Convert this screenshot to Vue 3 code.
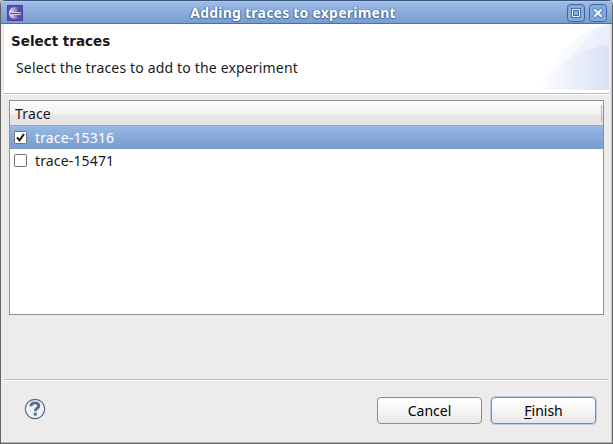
<script setup>
import { ref } from 'vue'

const traces = ref([
  { name: 'trace-15316', checked: true },
  { name: 'trace-15471', checked: false },
])
const selected = ref(0)
</script>

<template>
  <div class="window">
    <header class="titlebar">
      <svg class="app-icon" width="16" height="16" viewBox="0 0 16 16">
        <defs>
          <linearGradient id="ball" x1="0" x2="1">
            <stop offset="0" stop-color="#f4f3fc" />
            <stop offset=".55" stop-color="#8f88c8" />
            <stop offset="1" stop-color="#302864" />
          </linearGradient>
        </defs>
        <rect width="16" height="16" fill="#4d3fa6" />
        <rect x="1" y="1" width="14" height="14" fill="#5c4fb4" />
        <circle cx="8" cy="8" r="6" fill="url(#ball)" />
        <path d="M3 7.5h11M3 9.5h11" stroke="#c9c6ea" />
        <path d="M3 8.5h11" stroke="#5a50a4" />
      </svg>
      <h1 class="title">Adding traces to experiment</h1>
      <div class="controls">
        <svg width="18" height="18" viewBox="0 0 18 18">
          <rect x=".5" y=".5" width="17" height="17" rx="3" fill="#86a9dc" stroke="#3f659b" />
          <rect x="4" y="4" width="10" height="10" fill="#486fa8" />
          <path d="M5.5 5.5h7v7h-7z" fill="none" stroke="#e9f0fa" />
          <path d="M7 7h4v4h-4z" fill="#86a9dc" />
        </svg>
        <svg width="18" height="18" viewBox="0 0 18 18">
          <rect x=".5" y=".5" width="17" height="17" rx="3" fill="#86a9dc" stroke="#3f659b" />
          <path d="M6 6l6 6M12 6l-6 6" stroke="#5a80b8" stroke-width="4" stroke-linecap="square" />
          <path d="M6 6l6 6M12 6l-6 6" stroke="#edf3fb" stroke-width="2.2" stroke-linecap="square" />
        </svg>
      </div>
    </header>

    <section class="banner">
      <div class="banner-text">
        <h2>Select traces</h2>
        <p>Select the traces to add to the experiment</p>
      </div>
      <svg class="swoosh" width="76" height="66" viewBox="0 0 76 66">
        <defs>
          <linearGradient id="outer" x1="0" x2="1">
            <stop offset="0" stop-color="#fff" />
            <stop offset=".5" stop-color="#f9fafe" />
            <stop offset="1" stop-color="#edf2fb" />
          </linearGradient>
          <linearGradient id="inner" x1="0" x2="1">
            <stop offset="0" stop-color="#fff" />
            <stop offset=".5" stop-color="#ebf0fa" />
            <stop offset="1" stop-color="#dae2f6" />
          </linearGradient>
        </defs>
        <path d="M4 66C18 35 43 7 76 0V66Z" fill="url(#outer)" />
        <path d="M36 38C45 22 58 8 76 2V66H22Z" fill="#dfe8f8" opacity=".35" />
        <path d="M4 66C20 43 46 24 76 21V66Z" fill="url(#inner)" />
      </svg>
    </section>

    <main class="body">
      <div class="table">
        <div class="thead"><span>Trace</span></div>
        <div
          v-for="(trace, i) in traces"
          :key="trace.name"
          class="row"
          :class="{ selected: i === selected }"
          @click="selected = i"
        >
          <svg class="check" width="13" height="13" viewBox="0 0 13 13" @click="trace.checked = !trace.checked">
            <rect x=".5" y=".5" width="12" height="12" rx=".7" fill="#fff" stroke="#737373" />
            <path v-if="trace.checked" d="M3 6.4L5.5 9.4L10 3" fill="none" stroke="#151515" stroke-width="2" />
          </svg>
          <span>{{ trace.name }}</span>
        </div>
      </div>
    </main>

    <footer class="footer">
      <svg class="help" width="22" height="22" viewBox="0 0 22 22">
        <circle cx="11" cy="11" r="9.7" fill="#f1f2f4" stroke="#576b8b" stroke-width="1.2" />
        <path d="M6.9 8.2C7.1 3.9 14.8 3.8 14.8 7.8C14.8 10.4 11.3 10.2 11.3 13.2" fill="none" stroke="#566c92" stroke-width="2.9" />
        <rect x="9.7" y="14.7" width="3.1" height="2.9" fill="#566c92" />
      </svg>
      <div class="buttons">
        <button class="button cancel"><span>Cancel</span></button>
        <button class="button default"><span><u>F</u>inish</span></button>
      </div>
    </footer>
  </div>
</template>

<style>
body {
  margin: 0;
  overflow: hidden;
  background: #c8c6c3;
}
</style>

<style scoped>
* {
  box-sizing: border-box;
}
.window {
  width: 613px;
  height: 444px;
  display: flex;
  flex-direction: column;
  border: 1px solid #666564;
  border-top: 0;
  border-radius: 5px 5px 0 0;
  overflow: hidden;
  background: #edeceb;
  box-shadow: inset 0 -1px #b7b5b3, inset -1px 0 #c9c7c5;
  font-family: "Noto Sans", sans-serif;
  font-size: 14px;
  color: #1a1a1a;
}
.titlebar {
  height: 24px;
  flex: none;
  display: flex;
  align-items: center;
  padding: 1px 5px 0 6px;
  border-top: 1px solid #3c5478;
  border-bottom: 1px solid #4a70a8;
  box-shadow: inset 0 1px #b0c8ec;
  background: linear-gradient(#9dbce8, #789dcf);
}
.app-icon {
  flex: none;
}
.title {
  flex: 1;
  margin: 0;
  padding-right: 4px;
  text-align: center;
  font-size: 14px;
  line-height: 20px;
  font-weight: 700;
  letter-spacing: 0.23px;
  color: #fff;
  text-shadow: 0 1px 1px #42689d, 1px 0 1px #5077ae, -1px 0 1px #5077ae;
}
.controls {
  display: flex;
  gap: 4px;
}
.banner {
  height: 71px;
  flex: none;
  display: flex;
  justify-content: space-between;
  margin: 0 3px;
  background: #fff;
  border-bottom: 1px solid #fff;
  box-shadow: inset 0 -1px #bbb9b7;
}
.banner-text {
  padding: 9px 0 0 7px;
}
.banner h2 {
  margin: 0;
  font: bold 13.5px/17px "DejaVu Sans", sans-serif;
}
.banner p {
  margin: 8px 0 0 5px;
  line-height: 20px;
  letter-spacing: 0.165px;
  white-space: nowrap;
}
.swoosh {
  flex: none;
}
.body {
  height: 285px;
  flex: none;
  margin: 0 3px;
  padding: 5px 5px 0;
  border-bottom: 1px solid #c2c0be;
}
.table {
  height: 215px;
  border: 1px solid #908e8b;
  background: #fff;
  letter-spacing: 0.15px;
}
.thead {
  display: flex;
  height: 25px;
  padding: 2px 5px;
  line-height: 22px;
  border-bottom: 1px solid #a9a6a3;
  background: linear-gradient(#fcfcfc, #f1f0ef 58%, #e9e7e6 60%, #e5e3e1);
}
.thead::after {
  content: "";
  width: 1px;
  margin: 2px -4px 1px auto;
  background: #b5b2af;
}
.row {
  display: flex;
  align-items: center;
  height: 23px;
  padding-left: 4px;
  gap: 8px;
  line-height: 23px;
}
.row.selected {
  color: #fff;
  background: linear-gradient(#98b8e6, #779ccd);
}
.footer {
  flex: 1;
  display: flex;
  justify-content: space-between;
  align-items: flex-start;
  margin: 0 3px;
  padding: 17px 13px 0 20px;
  box-shadow: inset 0 1px #fff;
}
.help {
  margin-top: 1px;
}
.buttons {
  display: flex;
  gap: 9px;
}
.button {
  width: 105px;
  height: 27px;
  padding: 0;
  border: 1px solid #8f8d8a;
  border-radius: 4px;
  background: linear-gradient(#fff, #f6f6f5 50%, #e8e7e6);
  font: inherit;
  line-height: 24px;
  color: #000;
}
.button.default {
  border-color: #6e8fbe;
  box-shadow: 0 0 0 1px #b9cce8;
}
.button u {
  text-underline-offset: 2px;
}
</style>
